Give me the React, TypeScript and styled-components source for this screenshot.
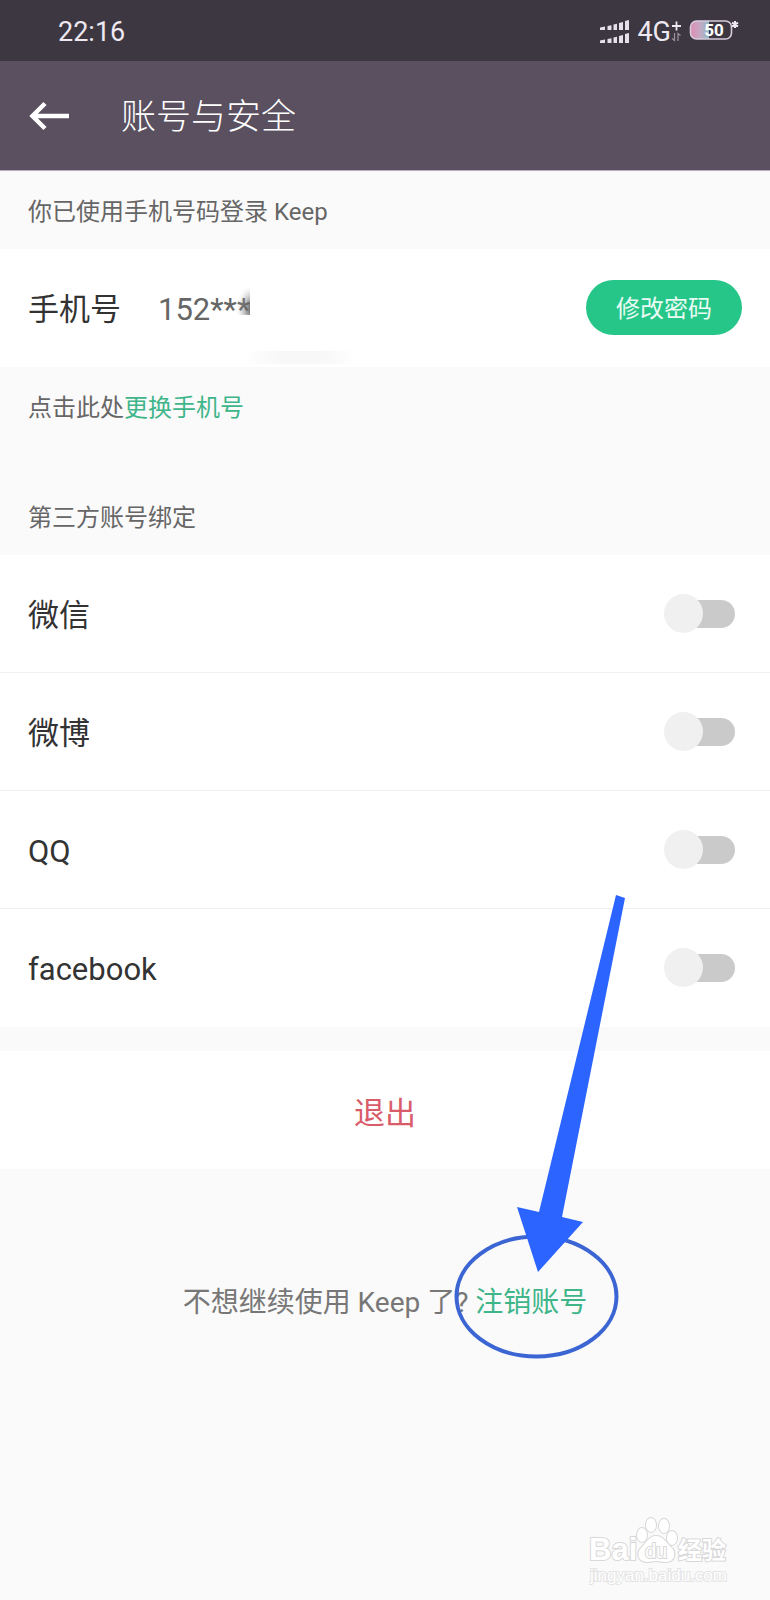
import React from 'react';
import styled, { createGlobalStyle } from 'styled-components';

const GlobalStyle = createGlobalStyle`
  *, *::before, *::after { box-sizing: border-box; }
  body {
    margin: 0;
    background: #fafafa;
    color: #333;
    font-family: Roboto, "Noto Sans CJK SC", sans-serif;
    font-weight: 400;
  }
  h1, h2, p { margin: 0; padding: 0; font-weight: inherit; }
  button { font: inherit; border: 0; cursor: pointer; }
  a { color: #3fb58a; text-decoration: none; }
`;

const Screen = styled.div`
  display: flex;
  flex-direction: column;
  min-height: 100vh;
  overflow-x: hidden;
`;

const StatusBar = styled.div`
  display: flex;
  align-items: center;
  justify-content: space-between;
  height: 61px;
  padding: 2px 31px 0 58px;
  background: #3d3742;
  color: #eee8f0;
  font-size: 27px;
  line-height: 32px;
`;

const StatusIcons = styled.div`
  display: flex;
  align-items: center;
  gap: 7px;
`;

const Network = styled.span`
  display: flex;
  align-items: center;
`;

const Battery = styled.span`
  display: flex;
  padding-bottom: 4px;
`;

const AppBar = styled.header`
  display: flex;
  align-items: center;
  gap: 50px;
  height: 110px;
  padding: 0 28px;
  background: #5a5060;
  border-bottom: 1px solid #b9aebd;
  color: #fff;
`;

const BackButton = styled.button`
  display: flex;
  padding: 0;
  background: none;
  color: inherit;
`;

const Title = styled.h1`
  padding-top: 5px;
  font-size: 35px;
  line-height: 52px;
  font-weight: 300;
`;

const SectionLabel = styled.h2`
  padding: 24px 28px 20px;
  color: #666;
  font-size: 24px;
  line-height: 34px;
`;

const Hint = styled.p`
  padding: 24px 28px 52px;
  color: #666;
  font-size: 24px;
  line-height: 34px;
`;

const Row = styled.div<{ $divided?: boolean }>`
  display: flex;
  align-items: center;
  height: 118px;
  padding: 0 28px;
  background: #fff;
  border-bottom: 1px solid ${(p) => (p.$divided ? '#efefef' : '#fff')};
  font-size: 31px;
  line-height: 46px;
`;

const RowLabel = styled.span`
  padding-top: 4px;
`;

const PhoneNumber = styled(RowLabel)`
  position: relative;
  margin-left: 37px;
  color: #666;
`;

const Smudge = styled.svg`
  position: absolute;
  left: 76px;
  top: 0;
`;

const PillButton = styled.button`
  height: 55px;
  margin-left: auto;
  padding: 2px 30px 0;
  border-radius: 28px;
  background: #26c689;
  color: #e9fbf3;
  && { font-size: 24px; }
  line-height: 34px;
`;

const ToggleRow = styled(Row).attrs({ as: 'label' })`
  justify-content: space-between;
  padding-right: 35px;
`;

const Toggle = styled.input.attrs({ type: 'checkbox', role: 'switch' })`
  appearance: none;
  display: grid;
  align-items: center;
  width: 71px;
  height: 39px;
  margin: 0;
  cursor: pointer;

  &::before, &::after { content: ""; grid-area: 1 / 1; }
  &::before {
    height: 28px;
    margin-left: 8px;
    border-radius: 14px;
    background: #cacaca;
  }
  &::after {
    width: 39px;
    height: 39px;
    border-radius: 50%;
    background: #f0f0f0;
  }
  &:checked::before { background: #93e3c4; }
  &:checked::after { justify-self: end; background: #26c689; }
`;

const LogoutButton = styled.button`
  height: 118px;
  margin-top: 24px;
  background: #fff;
  color: #d95c6a;
  && { font-size: 31px; }
`;

const Footer = styled.p`
  padding: 114px 28px 0;
  color: #777;
  font-size: 28px;
  line-height: 40px;
  text-align: center;
`;

const CloseAccount = styled.span`
  position: relative;
  display: inline-block;
`;

const Annotation = styled.svg`
  position: absolute;
  left: -21px;
  bottom: -37px;
  pointer-events: none;
`;

const Watermark = styled.div`
  align-self: flex-end;
  margin-top: auto;
  padding: 0 36px 6px 0;
`;

const accounts = ['微信', '微博', 'QQ', 'facebook'];

const SignalIcon = () => (
  <svg width="30" height="24" viewBox="0 0 30 24" fill="#e6e0e8" aria-hidden="true">
    <path d="M0 7.500l5-1v3.500H0zM7.500 6l4-.800V10h-4zM13.500 4.500l3.500-.700V10h-3.500zM19 3l4-1v8h-4zM25 1l4-1v10h-4z" />
    <path d="M0 20.500l5-1V23H0zM7.500 19l4-.800V23h-4zM13.500 17.500l3.500-.700V23h-3.500zM19 16l4-1v8h-4zM25 14l4-1v10h-4z" />
  </svg>
);

const PlusIcon = () => (
  <svg width="11" height="24" viewBox="0 0 11 24" fill="none" aria-hidden="true">
    <path d="M1 6h9M5.500 1.500v9" stroke="#eee8f0" strokeWidth="1.800" />
    <path d="M3.500 13v7.500l-2.500-2M7 21v-7.500l2.500 2" stroke="#98909d" strokeWidth="1.300" />
  </svg>
);

const BatteryIcon = () => (
  <svg width="50" height="26" viewBox="0 0 50 26" aria-label="50%">
    <defs>
      <linearGradient id="charge">
        <stop offset="0" stopColor="#dd8eb4" />
        <stop offset="0.450" stopColor="#c9a6c2" />
        <stop offset="1" stopColor="#8fbcc6" />
      </linearGradient>
    </defs>
    <path d="M8 4H20V22H8Q2 22 2 16V10Q2 4 8 4Z" fill="url(#charge)" />
    <rect x="1.500" y="4" width="41" height="18" rx="6" fill="none" stroke="#d8cbdc" strokeWidth="1.600" />
    <text x="25" y="19" textAnchor="middle" fontSize="17" fontWeight="700" fill="#fff">50</text>
    <path d="M46 4v7M43 5.700l6 3.600M49 5.700l-6 3.600" stroke="#eee8f0" strokeWidth="2" />
  </svg>
);

const BackIcon = () => (
  <svg width="43" height="32" viewBox="0 0 43 32" fill="none" stroke="currentColor" strokeWidth="4.500" aria-hidden="true">
    <path d="M4 16h37M17 3.500L4.500 16L17 28.500" />
  </svg>
);

const PointerDrawing = () => (
  <Annotation width="172" height="466" viewBox="0 0 172 466" aria-hidden="true">
    <ellipse cx="82.500" cy="402.500" rx="80" ry="60" fill="none" stroke="#3c65d4" strokeWidth="4" />
    <path d="M162 1L171 4L108 323L129 328L84 378L63 313L85 318Z" fill="#2c64ff" />
  </Annotation>
);

const WatermarkLogo = () => (
  <svg width="145" height="76" viewBox="0 0 145 76" fill="#fff" stroke="#d8d8d8" paintOrder="stroke" strokeWidth="2">
    <g fontWeight="700">
      <text x="0" y="46" fontSize="31" fontFamily="'Liberation Sans', sans-serif">Bai</text>
      <text x="89" y="45" fontSize="24" fontFamily="'Noto Sans CJK SC', sans-serif">经验</text>
    </g>
    <g strokeWidth="2">
      <ellipse cx="53" cy="21" rx="5" ry="7" />
      <ellipse cx="62" cy="11" rx="5" ry="7" />
      <ellipse cx="75" cy="12" rx="5" ry="7" />
      <ellipse cx="83" cy="24" rx="5" ry="7" />
      <path d="M67 22C74 22 77 28 82 33C88 39 86 48 77 48C72 48 70 47 67 47C64 47 62 48 58 48C49 48 47 39 52 34C58 28 60 22 67 22Z" />
    </g>
    <text x="67" y="44" textAnchor="middle" fontSize="20" fontFamily="'Liberation Sans', sans-serif">du</text>
    <text x="1" y="67" fontSize="17" fontFamily="'Liberation Sans', sans-serif" stroke="#e4e4e4">jingyan.baidu.com</text>
  </svg>
);

export default function App() {
  return (
    <>
      <GlobalStyle />
      <Screen>
        <StatusBar>
          <span>22:16</span>
          <StatusIcons>
            <SignalIcon />
            <Network>4G<PlusIcon /></Network>
            <Battery><BatteryIcon /></Battery>
          </StatusIcons>
        </StatusBar>
        <AppBar>
          <BackButton aria-label="返回"><BackIcon /></BackButton>
          <Title>账号与安全</Title>
        </AppBar>

        <SectionLabel>你已使用手机号码登录 Keep</SectionLabel>
        <Row>
          <RowLabel>手机号</RowLabel>
          <PhoneNumber>
            152***
            <Smudge width="126" height="84" viewBox="0 0 126 84" aria-hidden="true">
              <defs>
                <radialGradient id="smudge" gradientUnits="userSpaceOnUse" cx="0" cy="0" r="1" gradientTransform="translate(18 26) scale(17 25)">
                  <stop offset="0" stopColor="#444" stopOpacity="0.900" />
                  <stop offset="0.350" stopColor="#666" stopOpacity="0.600" />
                  <stop offset="0.700" stopColor="#999" stopOpacity="0.200" />
                  <stop offset="1" stopColor="#fff" stopOpacity="0" />
                </radialGradient>
                <linearGradient id="trace">
                  <stop offset="0" stopColor="#f6f6f6" stopOpacity="0" />
                  <stop offset="0.300" stopColor="#f8f8f8" />
                  <stop offset="0.700" stopColor="#f8f8f8" />
                  <stop offset="1" stopColor="#f6f6f6" stopOpacity="0" />
                </linearGradient>
              </defs>
              <rect x="0" y="0" width="16" height="32" fill="url(#smudge)" />
              <rect x="16" y="0" width="20" height="50" fill="#fff" />
              <rect x="12" y="68" width="110" height="13" fill="url(#trace)" />
            </Smudge>
          </PhoneNumber>
          <PillButton>修改密码</PillButton>
        </Row>
        <Hint>点击此处<a href="#change-phone">更换手机号</a></Hint>

        <SectionLabel>第三方账号绑定</SectionLabel>
        {accounts.map((name, i) => (
          <ToggleRow key={name} $divided={i < accounts.length - 1}>
            <RowLabel>{name}</RowLabel>
            <Toggle />
          </ToggleRow>
        ))}
        <LogoutButton>退出</LogoutButton>
        <Footer>
          不想继续使用 Keep 了?{' '}
          <CloseAccount>
            <a href="#close-account">注销账号</a>
            <PointerDrawing />
          </CloseAccount>
        </Footer>
        <Watermark><WatermarkLogo /></Watermark>
      </Screen>
    </>
  );
}
